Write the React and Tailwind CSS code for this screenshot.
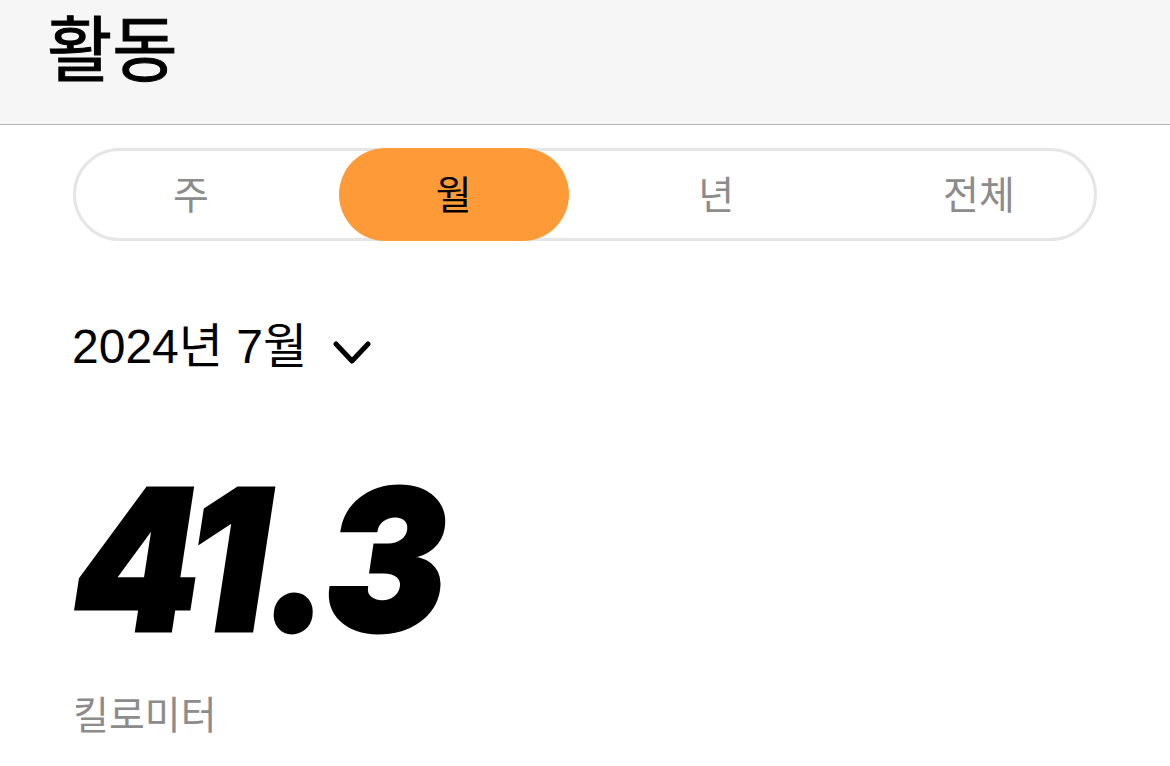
import React, { useState } from 'react';

const KR = { fontFamily: '"Noto Sans CJK KR", "Noto Sans", sans-serif' };

const tabs = ['주', '월', '년', '전체'];

export default function App() {
  const [active, setActive] = useState('월');

  return (
    <div className="w-[1170px] h-[766px] bg-white overflow-hidden" style={KR}>
      {/* header */}
      <header className="h-[125px] bg-[#f6f6f6] border-b border-[#b4b4b4] pl-[47px]">
        <h1 className="text-[71px] leading-[88px] font-normal text-black [-webkit-text-stroke:1px_black]">활동</h1>
      </header>

      <main className="px-[73px]">
        {/* segmented control */}
        <div className="mt-[23px] h-[93px] rounded-full border-[3px] border-[#e6e6e6] flex items-center justify-between">
          {tabs.map((t) => (
            <button
              key={t}
              onClick={() => setActive(t)}
              className={
                'w-[230px] h-[93px] -my-[3px] rounded-full flex items-center justify-center text-[39px] leading-none pb-[5px] ' +
                (active === t ? 'bg-[#fe9a37] text-black' : 'text-[#8c8c8c]')
              }
            >
              {t}
            </button>
          ))}
        </div>

        {/* month selector */}
        <div className="mt-[76px] flex items-center gap-[26px] -ml-[1px]">
          <span
            className="text-[48px] leading-[60px] text-black"
            style={{ fontFamily: '"Liberation Sans", "Noto Sans CJK KR", sans-serif' }}
          >
            2024년 7월
          </span>
          <svg width="38" height="26" viewBox="0 0 38 26" className="mt-[12px]">
            <polyline points="3,4 19,21 35,4" fill="none" stroke="black" strokeWidth="5" strokeLinecap="round" strokeLinejoin="round" />
          </svg>
        </div>

        {/* total */}
        <div
          className="mt-[98px] text-[197px] leading-[170px] font-black italic text-black tracking-[-4px] scale-x-[0.92] origin-left [-webkit-text-stroke:3px_black]"
          style={{ fontFamily: 'Inter, "Liberation Sans", sans-serif' }}
        >
          41.3
        </div>
        <div className="mt-[42px] text-[39px] leading-[50px] text-[#8c8c8c]">킬로미터</div>
      </main>
    </div>
  );
}
